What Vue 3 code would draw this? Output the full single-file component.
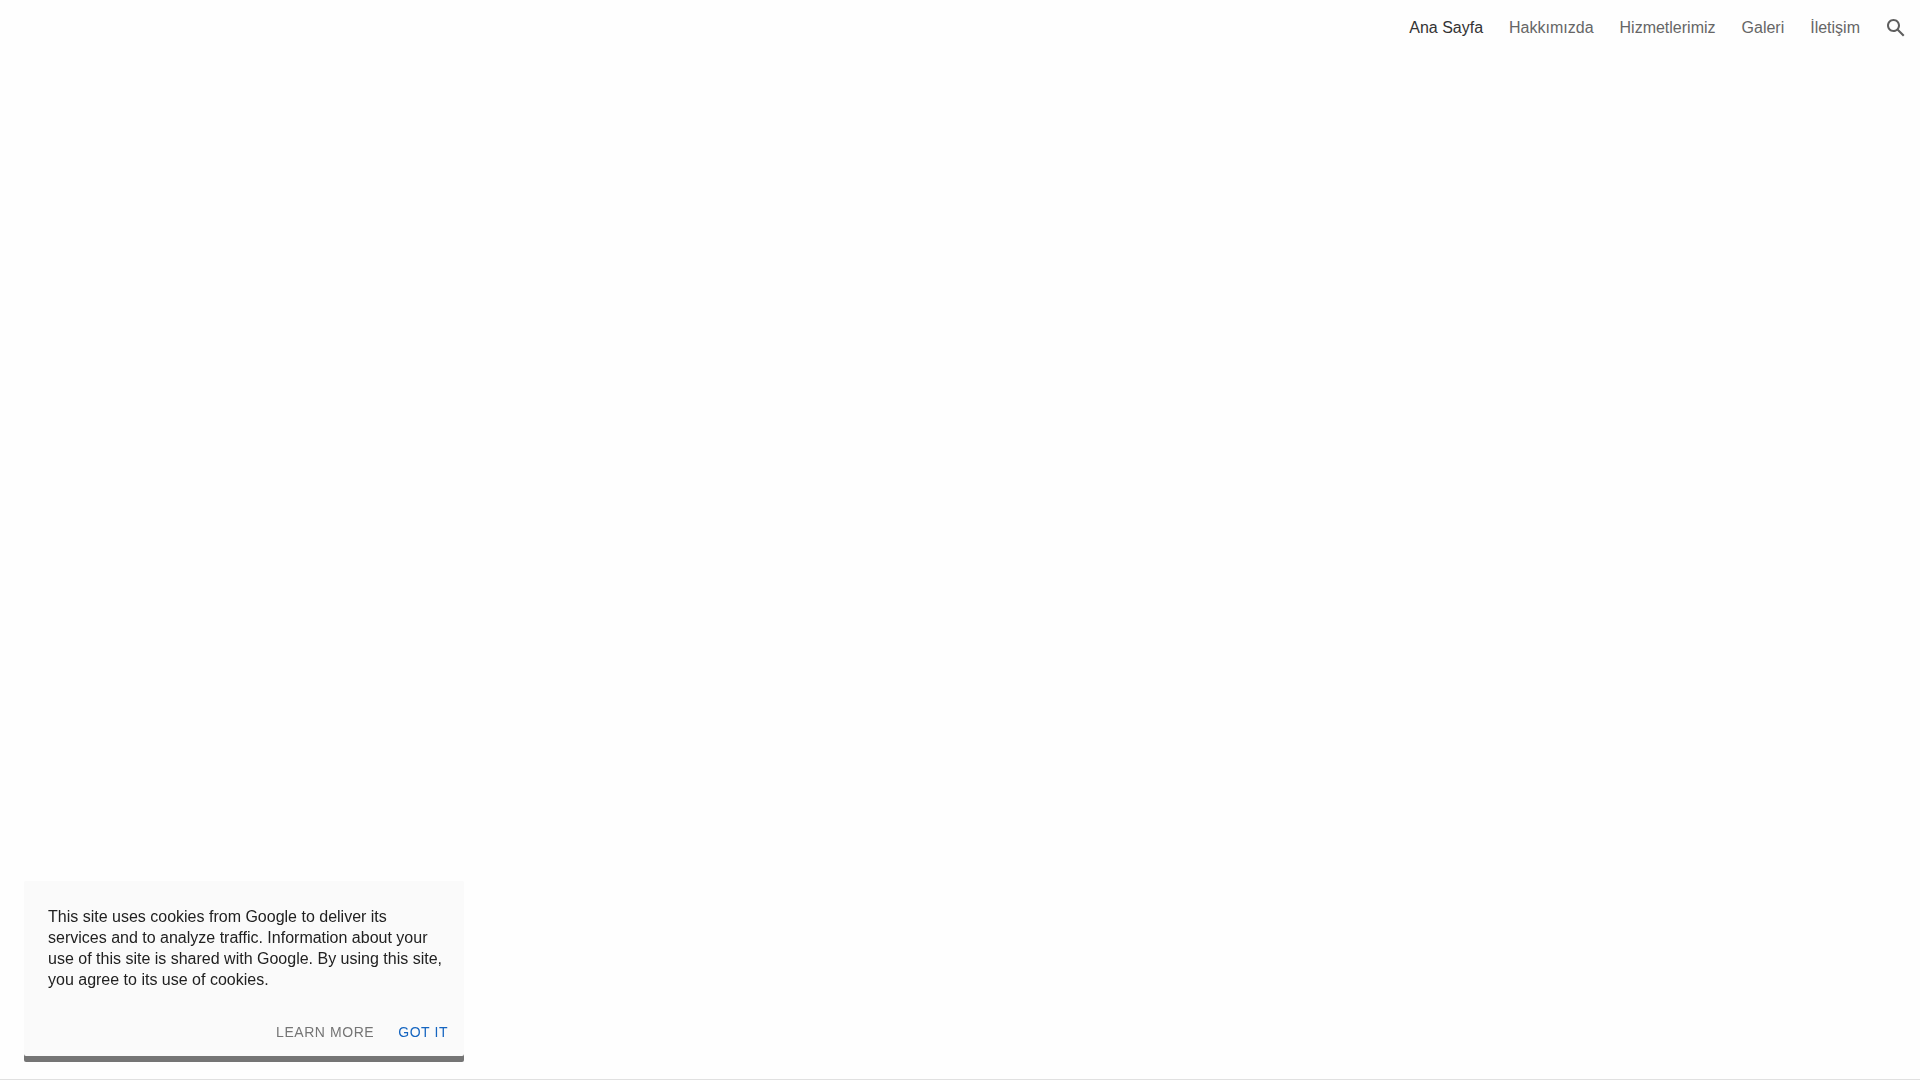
<script setup>
const links = [
  { label: 'Ana Sayfa', active: true },
  { label: 'Hakkımızda' },
  { label: 'Hizmetlerimiz' },
  { label: 'Galeri' },
  { label: 'İletişim' },
]
</script>

<template>
  <div class="page">
    <header class="bar">
      <nav class="nav">
        <a
          v-for="link in links"
          :key="link.label"
          href="#"
          class="nav-link"
          :class="{ active: link.active }"
          :aria-current="link.active ? 'page' : undefined"
        >{{ link.label }}</a>
      </nav>
      <button class="search" type="button" aria-label="Ara">
        <svg viewBox="0 0 24 24" width="24" height="24" aria-hidden="true">
          <path d="M20.49 19l-5.73-5.73C15.53 12.2 16 10.91 16 9.5 16 5.91 13.09 3 9.5 3S3 5.91 3 9.5 5.91 16 9.5 16c1.41 0 2.7-.47 3.77-1.24L19 20.49 20.49 19zM5 9.5C5 7.01 7.01 5 9.5 5S14 7.01 14 9.5 11.99 14 9.5 14 5 11.99 5 9.5z" />
        </svg>
      </button>
    </header>
    <main class="content"></main>
    <aside class="cookies">
      <p class="message">
        This site uses cookies from Google to deliver its services and to analyze traffic.
        Information about your use of this site is shared with Google. By using this site,
        you agree to its use of cookies.
      </p>
      <div class="actions">
        <a href="#" class="action">Learn more</a>
        <button type="button" class="action accept">Got it</button>
      </div>
    </aside>
  </div>
</template>

<style>
body {
  background: #fefefe;
}
</style>

<style scoped>
.page {
  display: flex;
  flex-direction: column;
  box-sizing: border-box;
  min-height: 100vh;
  border-bottom: 1px solid #e0e0e0;
  font-family: "Liberation Sans", Arial, sans-serif;
  font-size: 16px;
}
.bar {
  display: flex;
  align-items: center;
  justify-content: flex-end;
  gap: 24px;
  height: 56px;
  padding-right: 12px;
}
.nav {
  display: flex;
  gap: 26px;
}
.nav-link {
  color: #666;
  line-height: 24px;
  text-decoration: none;
}
.nav-link.active {
  color: #333;
}
.search {
  display: flex;
  padding: 0;
  border: 0;
  background: none;
  cursor: pointer;
}
.search svg {
  fill: #5f5f5f;
}
.content {
  flex: 1;
}
.cookies {
  position: fixed;
  bottom: 24px;
  left: 24px;
  box-sizing: border-box;
  width: 440px;
  max-width: calc(100% - 48px);
  padding: 25px 16px 16px 24px;
  border-radius: 2px;
  background: #fafafa;
  box-shadow: 0 6px 0 #757575;
}
.message {
  margin: 0;
  color: #212121;
  line-height: 21px;
}
.actions {
  display: flex;
  justify-content: flex-end;
  gap: 24px;
  padding-top: 34px;
}
.action {
  padding: 0;
  border: 0;
  background: none;
  color: #757575;
  font-family: inherit;
  font-size: 14px;
  letter-spacing: 0.04em;
  line-height: 16px;
  text-decoration: none;
  text-transform: uppercase;
  cursor: pointer;
}
.accept {
  color: #1565c0;
}
</style>
